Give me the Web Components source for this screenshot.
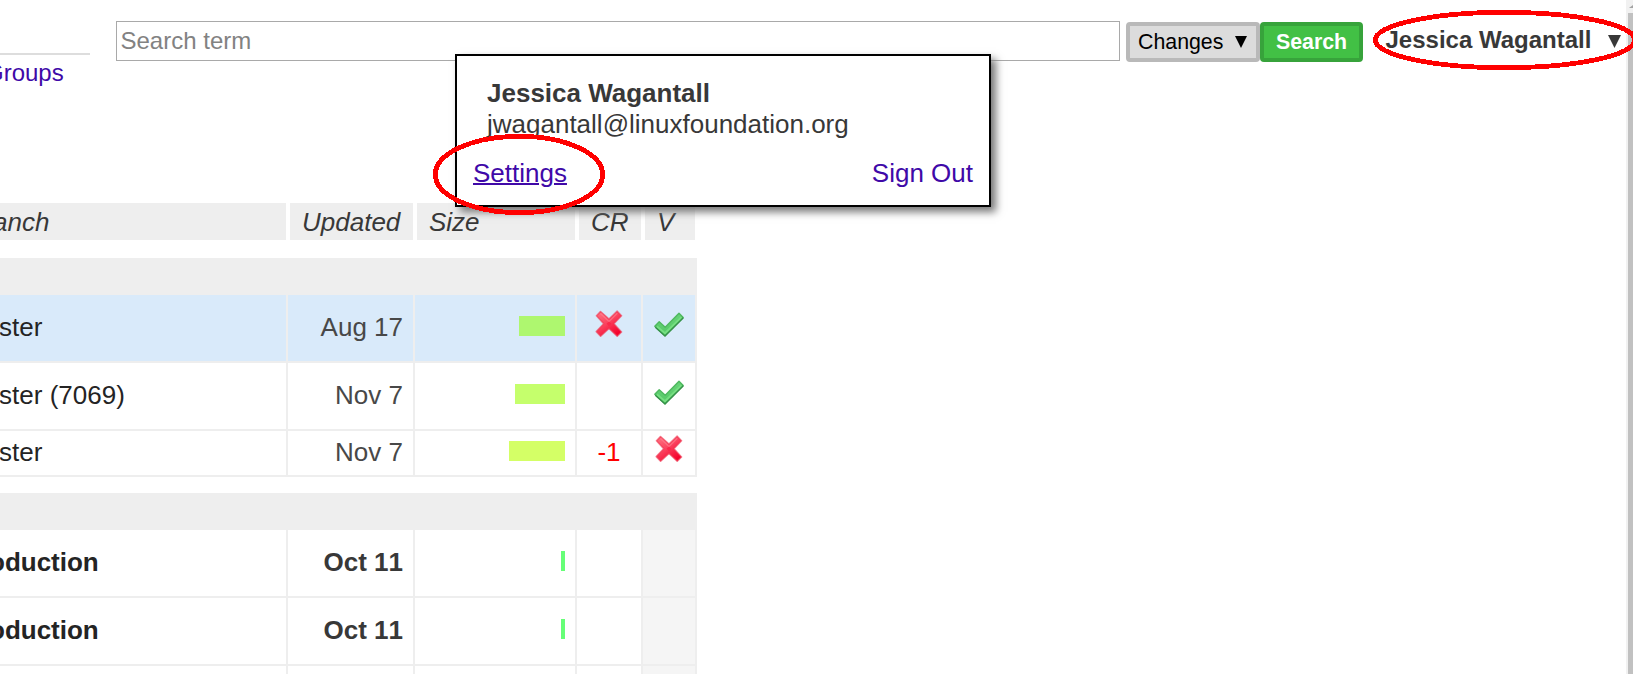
<!DOCTYPE html>
<html lang="en">
<head>
<meta charset="utf-8">
<title>Code review</title>
<style>
html,body{margin:0;height:100%;overflow:hidden;background:#fff}
body{font-family:"Liberation Sans",Arial,sans-serif;font-size:26px;color:#383838}
</style>
</head>
<body>
<review-app></review-app>
<script>
function define(name, html, setup) {
  const template = document.createElement('template');
  template.innerHTML = html;
  customElements.define(name, class extends HTMLElement {
    connectedCallback() {
      if (this.shadowRoot) return;
      this.attachShadow({mode: 'open'}).append(template.content.cloneNode(true));
      if (setup) setup(this, this.shadowRoot);
    }
  });
}

define('status-icon', `
<style>:host{display:block;width:32px;height:32px}svg{display:block;filter:blur(.55px)}.ok,:host([kind=ok]) .no{display:none}:host([kind=ok]) .ok{display:block}</style>
<svg class="no" width="32" height="32" viewBox="0 0 32 32">
  <defs><linearGradient id="r" x1="0" y1="0" x2=".7" y2="1"><stop offset="0" stop-color="#ff7885"/><stop offset=".5" stop-color="#fb4460"/><stop offset="1" stop-color="#f4002b"/></linearGradient></defs>
  <path d="M7.5 3.5 3.5 7.8 10.7 15.7 3.3 23.6 7.6 28.2 16 20.5 24.2 28.2 28.5 24 20.9 15.7 28.5 7.8 24.2 3.2 16 11Z" fill="url(#r)" stroke="#ef3852" stroke-opacity=".65" stroke-width="1.6" stroke-linejoin="round"/>
  <path d="M7.5 5.5 16 13.5 24.3 5.3" fill="none" stroke="#ff8a96" stroke-opacity=".5" stroke-width="1.5"/>
  <path d="m13.7 15.7 2.3-2.2 2.4 2.2-2.4 2.5Z" fill="#fa2849"/>
</svg>
<svg class="ok" width="32" height="32" viewBox="0 0 32 32">
  <defs><linearGradient id="g" x1="0" y1="0" x2="0" y2="1"><stop offset="0" stop-color="#68d278"/><stop offset="1" stop-color="#54c866"/></linearGradient></defs>
  <path d="M1.8 18.2 6.2 13.7 12.2 19.2 26 5.2 30.2 9.5 12 27.8Z" fill="url(#g)" stroke="#4eb85e" stroke-width="1.4" stroke-linejoin="round"/>
  <path d="M4 18.4 12 25.2 28.4 9.2" fill="none" stroke="#75df80" stroke-width="2"/>
  <path d="M2.3 19.3 12 28 30.3 9.8" fill="none" stroke="#37924a" stroke-width="1.4" stroke-linejoin="round"/>
</svg>`);

define('site-nav', `
<style>:host{display:block;width:90px;height:96px;flex:none;padding-top:53px;box-sizing:border-box}
div{height:2px;background:#ddd}a{display:block;margin:4px 0 0 -15px;font-size:24px;line-height:28px;color:#4009a8;text-decoration:none}</style>
<div></div><a>Groups</a>`);

define('tool-button', `
<style>:host{display:block;box-sizing:border-box;height:40px;border:4px solid #b9b9b9;border-radius:4px;background:#dcdcdc;color:#000;font-size:21.333px;line-height:24px;padding:4px 0 0 8px;white-space:nowrap;flex:none}
:host([primary]){background:#42c045;border-color:#37a33b;color:#fff;font-weight:bold;padding-left:12px}</style><slot></slot>`);

define('search-bar', `
<style>:host{display:flex;margin-left:26px;padding-top:21px}
.field{box-sizing:border-box;width:1004px;height:40px;border:1px solid #a9a9a9;padding:5px 0 0 3.5px;font-size:24px;line-height:28px;color:#828282;margin-right:6px}
tool-button{margin-top:1px;width:134px}tool-button[primary]{width:103px}
svg{display:inline-block;margin-left:11.6px;vertical-align:1px}</style>
<div class="field">Search term</div>
<tool-button>Changes<svg width="12" height="12" viewBox="0 0 12 12"><path d="M0 0H12L6 12Z"/></svg></tool-button>
<tool-button primary>Search</tool-button>`);

define('account-link', `
<style>:host{display:block;margin-left:22.5px;padding-top:26px;font-size:24px;line-height:28px;font-weight:bold;white-space:nowrap}
svg{margin-left:17px}</style><slot></slot><svg width="13" height="13" viewBox="0 0 13 13"><path d="M0 0H13L6.5 13Z" fill="#383838"/></svg>`);

define('account-menu', `
<style>:host{position:absolute;left:455px;top:54px;width:536px;height:153px;box-sizing:border-box;border:2px solid #000;background:#fff;box-shadow:5px 5px 8px #777;padding:22px 16px 0}
.who{padding-left:14px;line-height:31px}b{display:block}
.links{display:flex;justify-content:space-between;margin-top:18px;line-height:30px;color:#4009a8}
.on{text-decoration:underline;text-decoration-thickness:2px}</style>
<div class="who"><b>Jessica Wagantall</b><slot></slot></div>
<div class="links"><span class="on">Settings</span><span>Sign Out</span></div>`);

define('table-head', `
<style>:host{display:grid;grid-template-columns:286px 123px 158px 62px 50px;gap:4px;height:37px;width:695px;font-style:italic;line-height:38px}
span{height:37px;background:#eee;padding-left:12px;white-space:nowrap}
.first{padding:0;text-indent:-33px}</style>
<span class="first">Branch</span><span>Updated</span><span>Size</span><span>CR</span><span>V</span>`);

define('change-row', `
<style>:host{display:grid;grid-template-columns:288px 127px 162px 66px 54px;height:68px}
:host([short]){height:46px}
:host([selected]) div{background:#d9eafa}
:host([bold]){font-weight:bold}
:host([bold]) .v{background:#f5f5f5}
div{box-sizing:border-box;border:solid #eee;border-width:0 2px 2px 0;display:flex;align-items:center;padding-bottom:1px;white-space:nowrap}
.branch{color:#242424}.branch span{margin-left:-37px}
.date{justify-content:flex-end;padding-right:10px;color:#484848}:host([bold]) .date{color:#383838;font-kerning:none}
.size{justify-content:flex-end;padding:0 10px 4px 0}
.size i{height:20px}
.cr,.v{justify-content:center;color:#f00}
status-icon{margin-bottom:8px}</style>
<div class="branch"><span></span></div><div class="date"></div><div class="size"><i></i></div><div class="cr"></div><div class="v"></div>`,
(host, root) => {
  const get = n => host.getAttribute(n) || '';
  root.querySelector('span').textContent = get('branch');
  root.querySelector('.date').textContent = get('date');
  const bar = root.querySelector('i');
  bar.style.width = get('size') + 'px';
  bar.style.background = get('color');
  for (const key of ['cr', 'v']) {
    const value = get(key), cell = root.querySelector('.' + key);
    if (value === 'ok' || value === 'no') {
      const icon = document.createElement('status-icon');
      icon.setAttribute('kind', value);
      cell.append(icon);
    } else cell.textContent = value;
  }
});

define('change-group', `
<style>:host{display:block;width:697px}.band{height:37px;background:#eee}</style>
<div class="band"></div><slot></slot>`);

define('page-scrollbar', `
<style>:host{position:absolute;right:0;top:0;width:7px;height:674px;background:#f1f1f1;overflow:hidden}
.thumb{margin:5px 0 0 2px;height:661px;background:#c1c1c1}svg{display:block;margin:5px 0 0 3px}</style>
<svg width="6" height="3" viewBox="0 0 6 3"><path d="M0 3 4 0H6V3Z" fill="#a3a3a3"/></svg><div class="thumb"></div>`);

define('highlight-rings', `
<style>:host{position:absolute;inset:0;pointer-events:none}svg{display:block}</style>
<svg width="1633" height="674" fill="none" stroke="#f00" stroke-width="4.8" shape-rendering="crispEdges">
<ellipse cx="1505" cy="40" rx="129.7" ry="27.7"/><ellipse cx="519" cy="174.5" rx="83.7" ry="38.2"/></svg>`);

define('review-app', `
<style>:host{display:block;position:relative;width:1633px;height:674px;overflow:hidden}
header{display:flex;height:203px;align-items:flex-start}
table-head{margin-bottom:18px}change-group+change-group{margin-top:16px}</style>
<header><site-nav></site-nav><search-bar></search-bar><account-link>Jessica Wagantall</account-link></header>
<main>
<table-head></table-head>
<change-group>
<change-row selected branch="master" date="Aug 17" size="46" color="#aef76f" cr="no" v="ok"></change-row>
<change-row branch="master (7069)" date="Nov 7" size="50" color="#c5ff6c" v="ok"></change-row>
<change-row short branch="master" date="Nov 7" size="56" color="#d4ff66" cr="-1" v="no"></change-row>
</change-group>
<change-group>
<change-row bold branch="production" date="Oct 11" size="4" color="#66ff77"></change-row>
<change-row bold branch="production" date="Oct 11" size="4" color="#66ff77"></change-row>
<change-row bold></change-row>
</change-group>
</main>
<account-menu>jwagantall@linuxfoundation.org</account-menu>
<page-scrollbar></page-scrollbar>
<highlight-rings></highlight-rings>`);
</script>
</body>
</html>
